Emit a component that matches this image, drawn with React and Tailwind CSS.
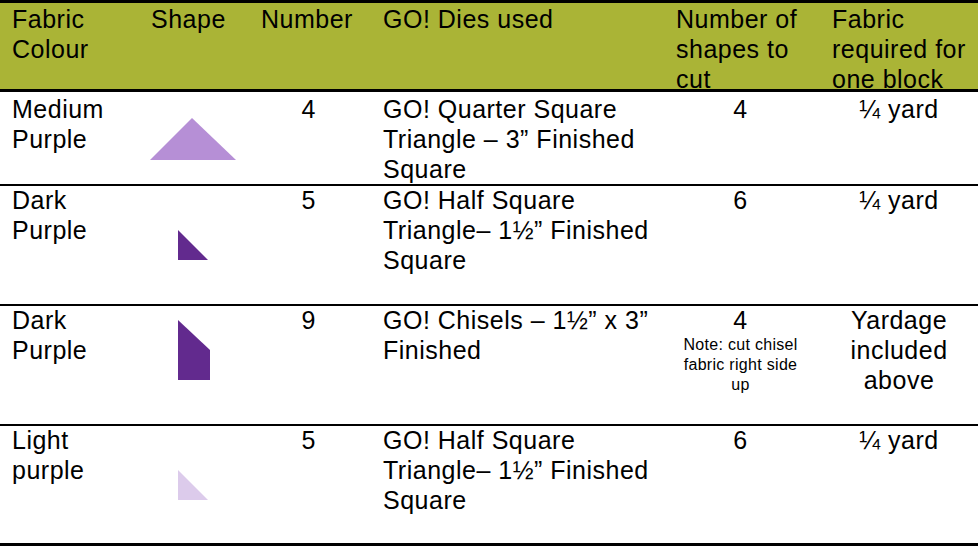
import React from "react";

const cols = "grid grid-cols-[139px_110px_122px_293px_156px_158px]";

function MediumTriangle() {
  return (
    <svg width="86" height="42" viewBox="0 0 86 42" className="ml-[11px] mt-[26px] block">
      <polygon points="42,0 86,42 0,42" fill="#b68fd6" />
    </svg>
  );
}

function SmallTriangle({ color }) {
  return (
    <svg width="30" height="30" viewBox="0 0 30 30" className="ml-[39px] mt-[44px] block">
      <polygon points="0,0 30,30 0,30" fill={color} />
    </svg>
  );
}

function Chisel() {
  return (
    <svg width="32" height="60" viewBox="0 0 32 60" className="ml-[39px] mt-[14px] block">
      <polygon points="0,0 32,30 32,60 0,60" fill="#622a8e" />
    </svg>
  );
}

const rows = [
  {
    colour: ["Medium", "Purple"],
    shape: <MediumTriangle />,
    number: "4",
    dies: ["GO! Quarter Square", "Triangle – 3” Finished", "Square"],
    count: "4",
    fabric: ["¼ yard"],
    h: "h-[94px] border-b-2",
    pt: "mt-[2px]",
  },
  {
    colour: ["Dark", "Purple"],
    shape: <SmallTriangle color="#622a8e" />,
    number: "5",
    dies: ["GO! Half Square", "Triangle– 1½” Finished", "Square"],
    count: "6",
    fabric: ["¼ yard"],
    h: "h-[120px] border-b-2",
    pt: "-mt-[1px]",
  },
  {
    colour: ["Dark", "Purple"],
    shape: <Chisel />,
    number: "9",
    dies: ["GO! Chisels – 1½” x 3”", "Finished"],
    count: "4",
    note: ["Note: cut chisel", "fabric right side", "up"],
    fabric: ["Yardage", "included", "above"],
    h: "h-[120px] border-b-2",
    pt: "-mt-[1px]",
  },
  {
    colour: ["Light", "purple"],
    shape: <SmallTriangle color="#dccbeb" />,
    number: "5",
    dies: ["GO! Half Square", "Triangle– 1½” Finished", "Square"],
    count: "6",
    fabric: ["¼ yard"],
    h: "h-[120px] border-b-[3px]",
    pt: "-mt-[1px]",
  },
];

function Lines({ items }) {
  return items.map((t, i) => (
    <div key={i} className="whitespace-nowrap">
      {t}
    </div>
  ));
}

export default function App() {
  return (
    <div
      className="w-[978px] h-[546px] bg-white text-black text-[25px] leading-[30px] tracking-[0.5px] overflow-hidden border-t-[3px] border-black"
      style={{ fontFamily: '"Liberation Sans", Arial, sans-serif' }}
    >
      <div className={`${cols} h-[89px] bg-[#aab436] border-b-[3px] border-black`}>
        <div className="pl-[12px] pt-[1px]">
          <Lines items={["Fabric", "Colour"]} />
        </div>
        <div className="pl-[12px] pt-[1px]">Shape</div>
        <div className="pl-[12px] pt-[1px]">Number</div>
        <div className="pl-[12px] pt-[1px]">GO! Dies used</div>
        <div className="pl-[12px] pt-[1px]">
          <Lines items={["Number of", "shapes to", "cut"]} />
        </div>
        <div className="pl-[12px] pt-[1px]">
          <Lines items={["Fabric", "required for", "one block"]} />
        </div>
      </div>
      {rows.map((r, i) => (
        <div key={i} className={`${cols} ${r.h} border-black`}>
          <div className={`pl-[12px] ${r.pt}`}>
            <Lines items={r.colour} />
          </div>
          <div>{r.shape}</div>
          <div className={`text-right pr-[55px] ${r.pt}`}>{r.number}</div>
          <div className={`pl-[12px] ${r.pt}`}>
            <Lines items={r.dies} />
          </div>
          <div className={`text-center pl-[12px] pr-[15px] ${r.pt}`}>
            <div>{r.count}</div>
            {r.note ? (
              <div className="text-[16px] leading-[20px] tracking-[0.3px]">
                <Lines items={r.note} />
              </div>
            ) : null}
          </div>
          <div className={`text-center ${r.pt}`}>
            <Lines items={r.fabric} />
          </div>
        </div>
      ))}
    </div>
  );
}
